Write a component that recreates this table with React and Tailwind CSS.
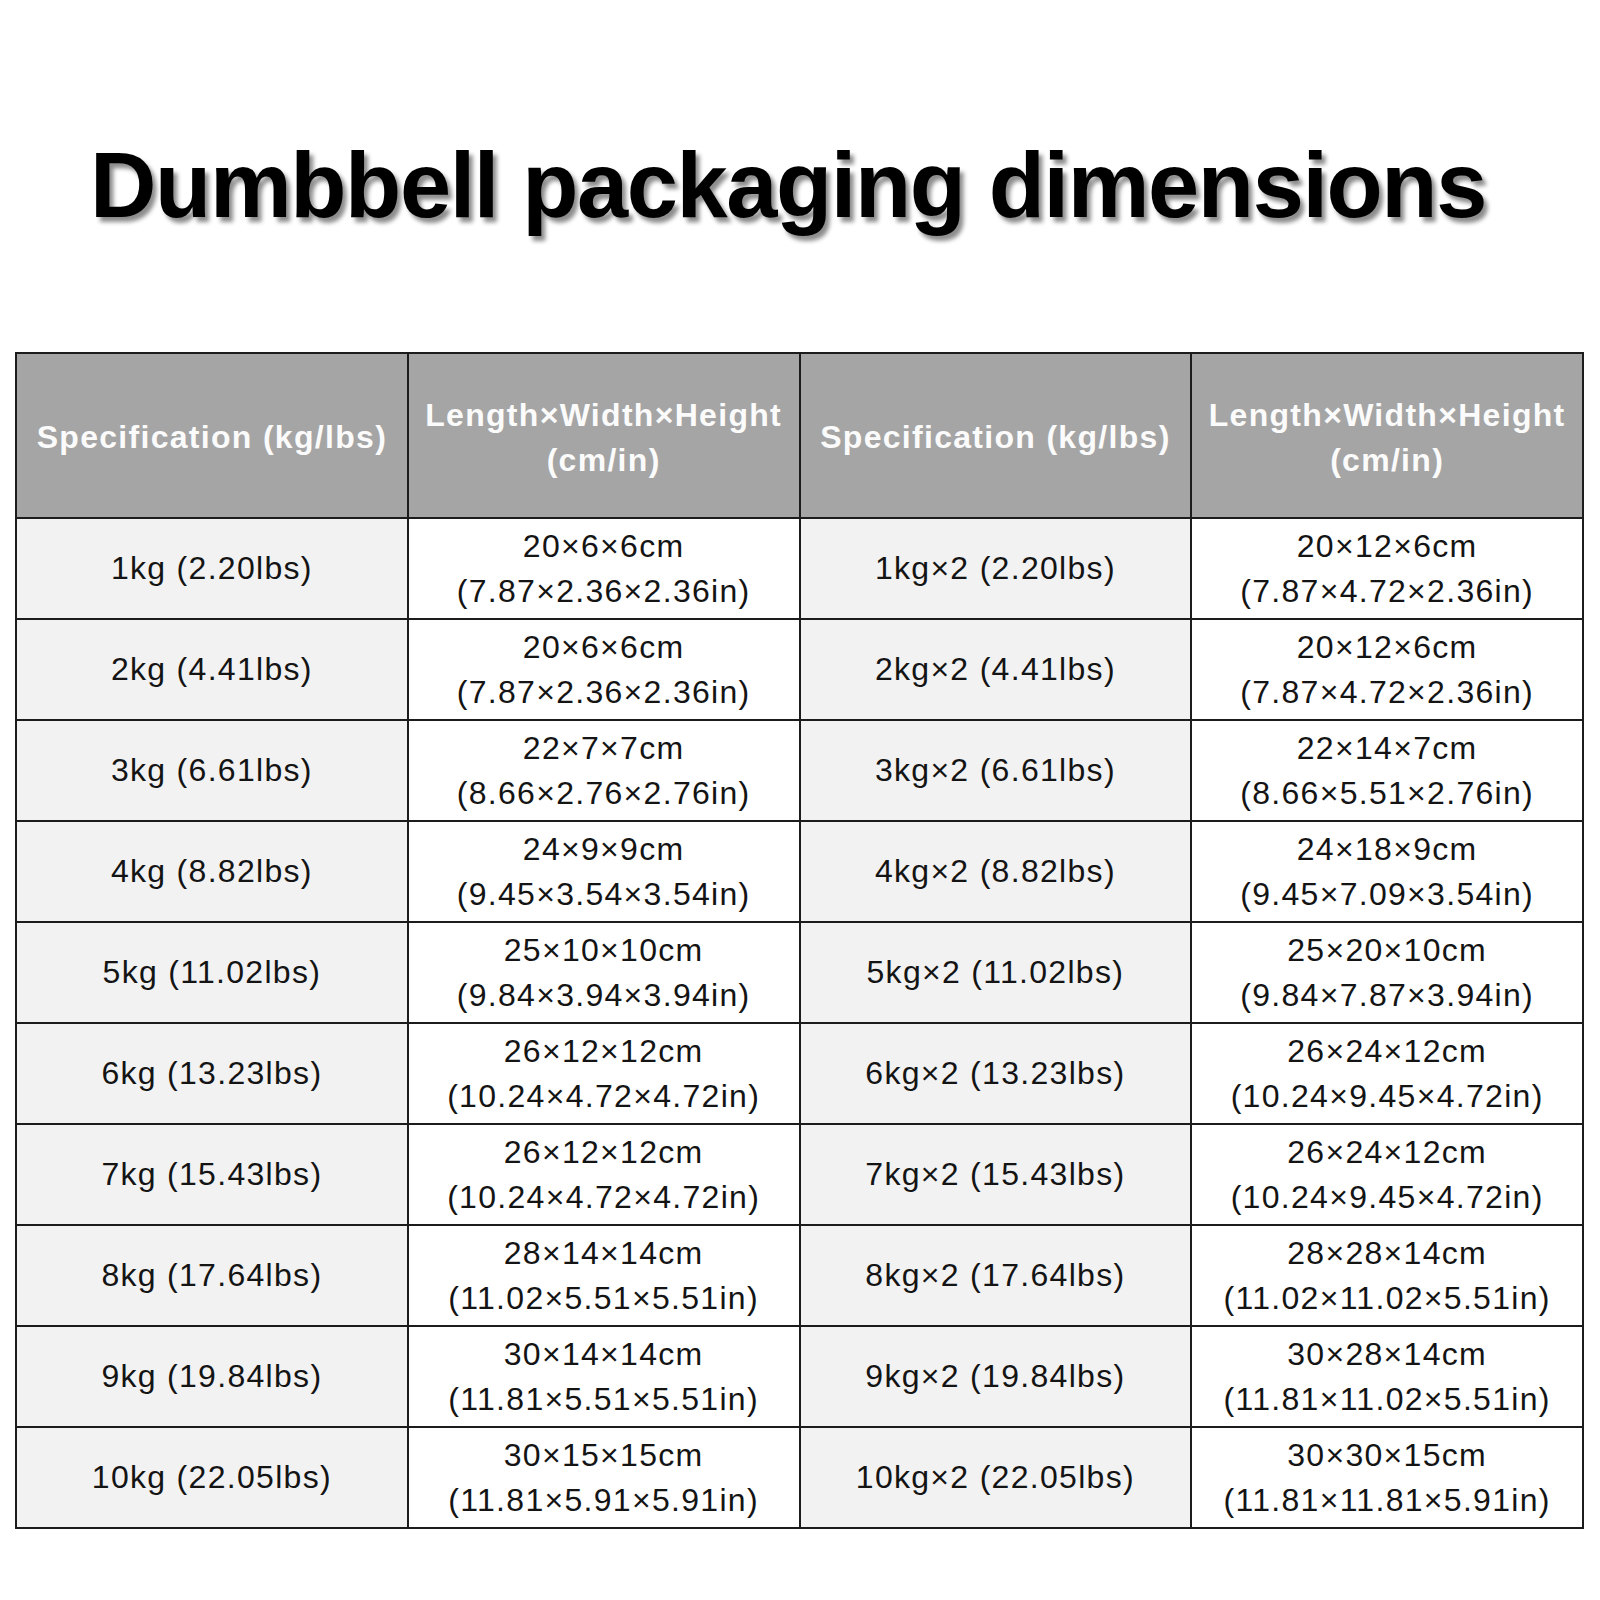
const ROWS = [
  ["1kg (2.20lbs)", "20×6×6cm", "(7.87×2.36×2.36in)", "1kg×2 (2.20lbs)", "20×12×6cm", "(7.87×4.72×2.36in)"],
  ["2kg (4.41lbs)", "20×6×6cm", "(7.87×2.36×2.36in)", "2kg×2 (4.41lbs)", "20×12×6cm", "(7.87×4.72×2.36in)"],
  ["3kg (6.61lbs)", "22×7×7cm", "(8.66×2.76×2.76in)", "3kg×2 (6.61lbs)", "22×14×7cm", "(8.66×5.51×2.76in)"],
  ["4kg (8.82lbs)", "24×9×9cm", "(9.45×3.54×3.54in)", "4kg×2 (8.82lbs)", "24×18×9cm", "(9.45×7.09×3.54in)"],
  ["5kg (11.02lbs)", "25×10×10cm", "(9.84×3.94×3.94in)", "5kg×2 (11.02lbs)", "25×20×10cm", "(9.84×7.87×3.94in)"],
  ["6kg (13.23lbs)", "26×12×12cm", "(10.24×4.72×4.72in)", "6kg×2 (13.23lbs)", "26×24×12cm", "(10.24×9.45×4.72in)"],
  ["7kg (15.43lbs)", "26×12×12cm", "(10.24×4.72×4.72in)", "7kg×2 (15.43lbs)", "26×24×12cm", "(10.24×9.45×4.72in)"],
  ["8kg (17.64lbs)", "28×14×14cm", "(11.02×5.51×5.51in)", "8kg×2 (17.64lbs)", "28×28×14cm", "(11.02×11.02×5.51in)"],
  ["9kg (19.84lbs)", "30×14×14cm", "(11.81×5.51×5.51in)", "9kg×2 (19.84lbs)", "30×28×14cm", "(11.81×11.02×5.51in)"],
  ["10kg (22.05lbs)", "30×15×15cm", "(11.81×5.91×5.91in)", "10kg×2 (22.05lbs)", "30×30×15cm", "(11.81×11.81×5.91in)"],
];

const cell = "border-2 border-[#1c1c1c] text-center align-middle p-0";

const HeadCell = ({ children }) => (
  <th className={`${cell} bg-[#a5a5a5] text-[#fbfbfb] font-bold leading-[45px] pt-1`}>{children}</th>
);

export default function App() {
  return (
    <div className="w-[1600px] h-[1600px] bg-white font-['Liberation_Sans',Arial,sans-serif] pt-[139px]">
      <h1
        className="text-[92px] leading-none font-bold text-black tracking-[-1.4px] text-center pr-[24px]"
        style={{ textShadow: "4px 5px 4px rgba(0,0,0,0.45)" }}
      >
        Dumbbell packaging dimensions
      </h1>

      <table className="mt-[121px] ml-[15px] w-[1569px] table-fixed border-collapse border-2 border-[#1c1c1c] text-[32px] tracking-[1.3px]">
        <thead>
          <tr className="h-[165px]">
            <HeadCell>Specification (kg/lbs)</HeadCell>
            <HeadCell>Length×Width×Height<br />(cm/in)</HeadCell>
            <HeadCell>Specification (kg/lbs)</HeadCell>
            <HeadCell>Length×Width×Height<br />(cm/in)</HeadCell>
          </tr>
        </thead>
        <tbody className="text-[#141414] leading-[45px]">
          {ROWS.map((r, i) => (
            <tr key={i} className="h-[101px]">
              <td className={`${cell} bg-[#f2f2f2]`}>{r[0]}</td>
              <td className={`${cell} bg-white`}>
                {r[1]}
                <br />
                {r[2]}
              </td>
              <td className={`${cell} bg-[#f2f2f2]`}>{r[3]}</td>
              <td className={`${cell} bg-white`}>
                {r[4]}
                <br />
                {r[5]}
              </td>
            </tr>
          ))}
        </tbody>
      </table>
    </div>
  );
}
